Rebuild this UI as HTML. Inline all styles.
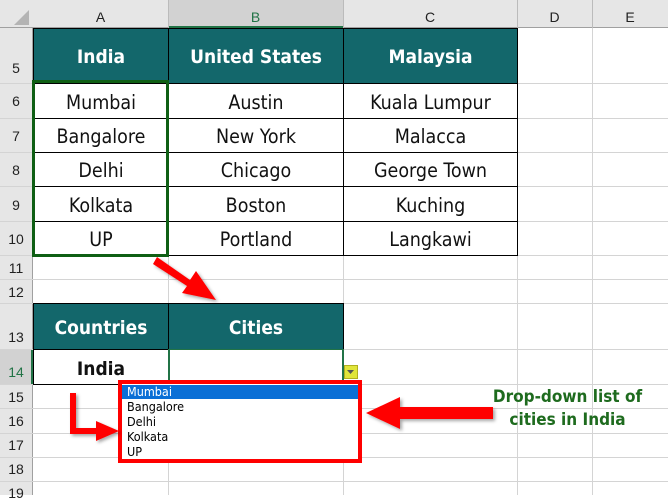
<!DOCTYPE html>
<html><head><meta charset="utf-8"><style>
body{margin:0;width:668px;height:495px;overflow:hidden;background:#fff;font-family:"Liberation Sans",sans-serif;position:relative}
.a{position:absolute;box-sizing:border-box}
.hl{position:absolute;height:1px;background:#d4d4d4}
.vl{position:absolute;width:1px;background:#d4d4d4}
.ch{position:absolute;top:0;height:28px;color:#222;font-size:14px;text-align:center;line-height:34px}
.rh{position:absolute;left:0;width:32px;font-size:14px;color:#222;text-align:center}
.c{position:absolute;text-align:center;font-size:19.5px;color:#111;font-family:"DejaVu Sans Condensed","Liberation Sans",sans-serif;display:flex;align-items:center;justify-content:center;box-sizing:border-box;padding-top:2px}
.t{background:#13676b;color:#fff;font-weight:bold;border:1px solid #000;font-size:19px}
.b{border:1px solid #000}
</style></head><body>
<div class="a" style="left:0;top:0;width:668px;height:28px;background:#e6e6e6;border-bottom:1px solid #a0a0a0"></div>
<div class="a" style="left:168px;top:0;width:175px;height:28px;background:#d2d2d2;border-bottom:2px solid #217346"></div>
<div class="a" style="left:0;top:28px;width:33px;height:467px;background:#e6e6e6;border-right:1px solid #a0a0a0"></div>
<div class="a" style="left:0;top:349px;width:33px;height:35px;background:#d2d2d2;border-right:2px solid #217346"></div>
<svg class="a" style="left:14px;top:10px" width="16" height="16"><polygon points="15,0 15,15 0,15" fill="#b4b4b4"/></svg>
<div class="ch" style="left:33px;width:135px">A</div>
<div class="ch" style="left:168px;width:175px;color:#217346">B</div>
<div class="ch" style="left:343px;width:174px">C</div>
<div class="ch" style="left:517px;width:75px">D</div>
<div class="ch" style="left:592px;width:76px">E</div>
<div class="vl" style="left:168px;top:0;height:28px;background:#bbb"></div>
<div class="vl" style="left:343px;top:0;height:28px;background:#bbb"></div>
<div class="vl" style="left:517px;top:0;height:28px;background:#bbb"></div>
<div class="vl" style="left:592px;top:0;height:28px;background:#bbb"></div>
<div class="vl" style="left:168px;top:28px;height:467px"></div>
<div class="vl" style="left:343px;top:28px;height:467px"></div>
<div class="vl" style="left:517px;top:28px;height:467px"></div>
<div class="vl" style="left:592px;top:28px;height:467px"></div>
<div class="hl" style="left:0;width:668px;top:83px"></div>
<div class="hl" style="left:0;width:668px;top:118px"></div>
<div class="hl" style="left:0;width:668px;top:152px"></div>
<div class="hl" style="left:0;width:668px;top:186px"></div>
<div class="hl" style="left:0;width:668px;top:221px"></div>
<div class="hl" style="left:0;width:668px;top:255px"></div>
<div class="hl" style="left:0;width:668px;top:279px"></div>
<div class="hl" style="left:0;width:668px;top:303px"></div>
<div class="hl" style="left:0;width:668px;top:349px"></div>
<div class="hl" style="left:0;width:668px;top:384px"></div>
<div class="hl" style="left:0;width:668px;top:408px"></div>
<div class="hl" style="left:0;width:668px;top:433px"></div>
<div class="hl" style="left:0;width:668px;top:457px"></div>
<div class="hl" style="left:0;width:668px;top:481px"></div>
<div class="rh" style="top:60px">5</div>
<div class="rh" style="top:93px">6</div>
<div class="rh" style="top:128px">7</div>
<div class="rh" style="top:162px">8</div>
<div class="rh" style="top:197px">9</div>
<div class="rh" style="top:231px">10</div>
<div class="rh" style="top:260px">11</div>
<div class="rh" style="top:284px">12</div>
<div class="rh" style="top:329px">13</div>
<div class="rh" style="top:364px;color:#217346">14</div>
<div class="rh" style="top:389px">15</div>
<div class="rh" style="top:413px">16</div>
<div class="rh" style="top:437px">17</div>
<div class="rh" style="top:461px">18</div>
<div class="rh" style="top:485px">19</div>
<div class="c t" style="left:33px;top:28px;width:136px;height:56px">India</div>
<div class="c t" style="left:168px;top:28px;width:176px;height:56px">United States</div>
<div class="c t" style="left:343px;top:28px;width:175px;height:56px">Malaysia</div>
<div class="c b" style="left:168px;top:83px;width:176px;height:36px">Austin</div>
<div class="c b" style="left:168px;top:118px;width:176px;height:35px">New York</div>
<div class="c b" style="left:168px;top:152px;width:176px;height:35px">Chicago</div>
<div class="c b" style="left:168px;top:186px;width:176px;height:36px">Boston</div>
<div class="c b" style="left:168px;top:221px;width:176px;height:35px">Portland</div>
<div class="c b" style="left:343px;top:83px;width:175px;height:36px">Kuala Lumpur</div>
<div class="c b" style="left:343px;top:118px;width:175px;height:35px">Malacca</div>
<div class="c b" style="left:343px;top:152px;width:175px;height:35px">George Town</div>
<div class="c b" style="left:343px;top:186px;width:175px;height:36px">Kuching</div>
<div class="c b" style="left:343px;top:221px;width:175px;height:35px">Langkawi</div>
<div class="c b" style="left:33px;top:83px;width:136px;height:36px">Mumbai</div>
<div class="c b" style="left:33px;top:118px;width:136px;height:35px">Bangalore</div>
<div class="c b" style="left:33px;top:152px;width:136px;height:35px">Delhi</div>
<div class="c b" style="left:33px;top:186px;width:136px;height:36px">Kolkata</div>
<div class="c b" style="left:33px;top:221px;width:136px;height:35px">UP</div>
<div class="a" style="left:32px;top:80px;width:137px;height:177px;border:3px solid #0f5f14"></div>
<div class="c t" style="left:33px;top:303px;width:136px;height:47px">Countries</div>
<div class="c t" style="left:168px;top:303px;width:176px;height:47px">Cities</div>
<div class="c" style="left:33px;top:349px;width:136px;height:36px;border:1px solid #000;border-top:none;font-weight:bold;font-size:19px;padding-top:5px">India</div>
<div class="a" style="left:168px;top:349px;width:176px;height:36px;border:2px solid #217346;border-top:1px solid #217346"></div>
<div class="a" style="left:344px;top:365px;width:14px;height:14px;background:#e0e53a;border:1px solid #b0b020"></div>
<svg class="a" style="left:347px;top:370px" width="8" height="5"><polygon points="0,0 7,0 3.5,4" fill="#555"/></svg>
<div class="a" style="left:118px;top:380px;width:244px;height:83px;border:4px solid #f00;background:#fff"></div>
<div class="a" style="left:122px;top:385px;width:236px;height:14px;background:#0a6fd6"></div>
<div class="a" style="left:127px;top:385px;font-size:12.5px;line-height:15px;font-family:'DejaVu Sans Condensed','Liberation Sans',sans-serif;color:#000">
<div style="color:#fff;height:14px;line-height:14px">Mumbai</div><div>Bangalore</div><div>Delhi</div><div>Kolkata</div><div>UP</div></div>
<svg class="a" style="left:0;top:0" width="668" height="495">
<defs><filter id="s"><feDropShadow dx="2" dy="2" stdDeviation="1.5" flood-color="#000" flood-opacity="0.35"/></filter></defs>
<g fill="#f00" stroke="none" filter="url(#s)">
<polygon points="153,264 157,257 190,280 196,271 216,300 182,293 187,286"/>
<polygon points="70,393 76,393 76,428 96,428 96,421 119,431 96,441 96,434 70,434"/>
<polygon points="366,413 400,397 400,407 493,407 493,419 400,419 400,429"/>
</g></svg>
<div class="a" style="left:480px;top:386px;width:175px;text-align:center;color:#1e6b1e;font-weight:bold;font-size:17px;line-height:23px;font-family:'DejaVu Sans Condensed','Liberation Sans',sans-serif">Drop-down list of<br>cities in India</div>
</body></html>
